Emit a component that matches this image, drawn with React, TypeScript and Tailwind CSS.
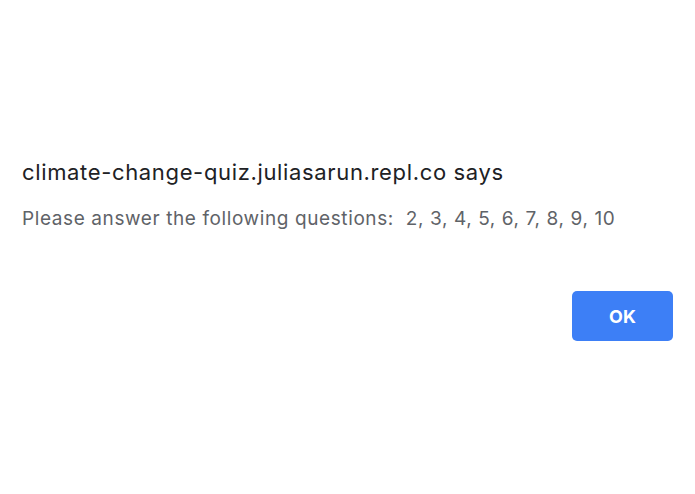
export default function App() {
  return (
    <div className="w-[695px] h-[494px] bg-white flex flex-col pl-[22px] pr-[22px] pt-[159px] font-['Inter',sans-serif]">
      <div className="text-[22px] leading-[26px] tracking-[0.65px] text-[#202124]">climate-change-quiz.juliasarun.repl.co says</div>
      <div className="mt-[23px] text-[19px] leading-[22px] tracking-[0.6px] text-[#5f6368]">Please answer the following questions:&nbsp; 2, 3, 4, 5, 6, 7, 8, 9, 10</div>
      <div className="flex justify-end mt-[61px]">
        <button className="w-[101px] h-[50px] rounded-[5px] bg-[#3d7ff6] text-white text-[18px] font-bold">OK</button>
      </div>
    </div>
  );
}
